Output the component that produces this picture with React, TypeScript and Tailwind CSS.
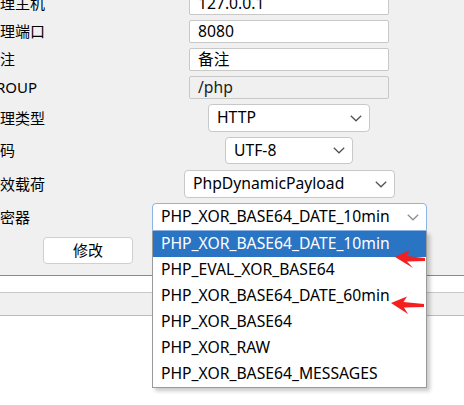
import React from "react";

const font = { fontFamily: '"Noto Sans", "Noto Sans CJK SC", sans-serif' };

function Chevron({ color = "#505050" }: { color?: string }) {
  return (
    <svg width="12" height="7" viewBox="0 0 12 7" className="shrink-0">
      <polyline points="0.8,0.8 6,5.8 11.2,0.8" fill="none" stroke={color} strokeWidth="1.2" />
    </svg>
  );
}

function Label({ children }: { children: React.ReactNode }) {
  return <div className="-ml-[15px] w-[167px] shrink-0 whitespace-nowrap text-[15px] text-black">{children}</div>;
}

function Field({ value, disabled }: { value: string; disabled?: boolean }) {
  return (
    <div
      className={`ml-[37px] flex h-[23px] w-[200px] items-center rounded-[2px] border border-[#c8c8c8] pl-[8px] pt-px text-[15.7px] ${
        disabled ? "bg-[#f0f0f0] text-[#222]" : "bg-white text-black"
      }`}
    >
      {value}
    </div>
  );
}

function Select({ value, ml, w, focus }: { value: string; ml: string; w: string; focus?: boolean }) {
  return (
    <div
      className={`${ml} ${w} flex h-full items-center justify-between rounded-[4px] border bg-white pl-[8px] pr-[7px] text-[15.7px] text-black ${
        focus ? "rounded-b-none border-[#8db4e2]" : "border-[#c8c8c8]"
      }`}
    >
      <span className="whitespace-nowrap">{value}</span>
      <Chevron color={focus ? "#8c8c8c" : "#505050"} />
    </div>
  );
}

const items = [
  "PHP_XOR_BASE64_DATE_10min",
  "PHP_EVAL_XOR_BASE64",
  "PHP_XOR_BASE64_DATE_60min",
  "PHP_XOR_BASE64",
  "PHP_XOR_RAW",
  "PHP_XOR_BASE64_MESSAGES",
];

export default function App() {
  return (
    <div className="relative h-[405px] w-[464px] overflow-hidden bg-white" style={font}>
      <div className="flex h-[275px] flex-col bg-[#f0f0f0]">
        <div className="-mt-[8px] flex h-[23px] items-center">
          <Label>代理主机</Label>
          <Field value="127.0.0.1" />
        </div>
        <div className="mt-[5px] flex h-[23px] items-center">
          <Label>代理端口</Label>
          <Field value="8080" />
        </div>
        <div className="mt-[5px] flex h-[23px] items-center">
          <Label>备注</Label>
          <Field value="备注" />
        </div>
        <div className="mt-[5px] flex h-[23px] items-center">
          <Label>GROUP</Label>
          <Field value="/php" disabled />
        </div>
        <div className="mt-[5px] flex h-[28px] items-center">
          <Label>代理类型</Label>
          <Select value="HTTP" ml="ml-[56px]" w="w-[162px]" />
        </div>
        <div className="mt-[5px] flex h-[27px] items-center">
          <Label>编码</Label>
          <Select value="UTF-8" ml="ml-[73px]" w="w-[128px]" />
        </div>
        <div className="mt-[6px] flex h-[28px] items-center">
          <Label>有效载荷</Label>
          <Select value="PhpDynamicPayload" ml="ml-[32px]" w="w-[211px]" />
        </div>
        <div className="mt-[5px] flex h-[28px] items-center">
          <Label>加密器</Label>
          <Select value="PHP_XOR_BASE64_DATE_10min" ml="ml-0" w="w-[275px]" focus />
        </div>
        <div className="mt-[6px] flex h-[27px]">
          <button className="ml-[43px] flex h-full w-[90px] items-center justify-center rounded-[4px] border border-[#cfcfcf] bg-white text-[15px] text-black">
            修改
          </button>
        </div>
      </div>
      <div className="h-px bg-[#8a8a8a]" />
      <div className="h-[16px] bg-white" />
      <div className="h-px bg-[#c8c8c8]" />
      <div className="h-[22px] bg-[#f0f0f0]" />
      <div className="h-px bg-[#bcbcbc]" />

      <div className="absolute left-[152px] top-[231px] w-[275px] border border-t-0 border-[#9a9a9a] bg-white shadow-[3px_3px_4px_rgba(0,0,0,0.22)]">
        {items.map((it, i) => (
          <div
            key={it}
            className={`flex h-[26px] items-center whitespace-nowrap pl-[8px] text-[15.7px] ${
              i === 0 ? "bg-[#2a74c4] text-white" : "text-black"
            }`}
          >
            {it}
          </div>
        ))}
      </div>

      <svg className="pointer-events-none absolute left-0 top-0" width="464" height="405" viewBox="0 0 464 405">
        <polygon points="395,257 410,250 406.5,256 425,258 425,261 407,261.5 413,268" fill="#f41f1f" />
        <polygon points="391,303 407,296.5 403.5,302 424,304 424,307 404,307.5 408,314" fill="#f41f1f" />
      </svg>
    </div>
  );
}
